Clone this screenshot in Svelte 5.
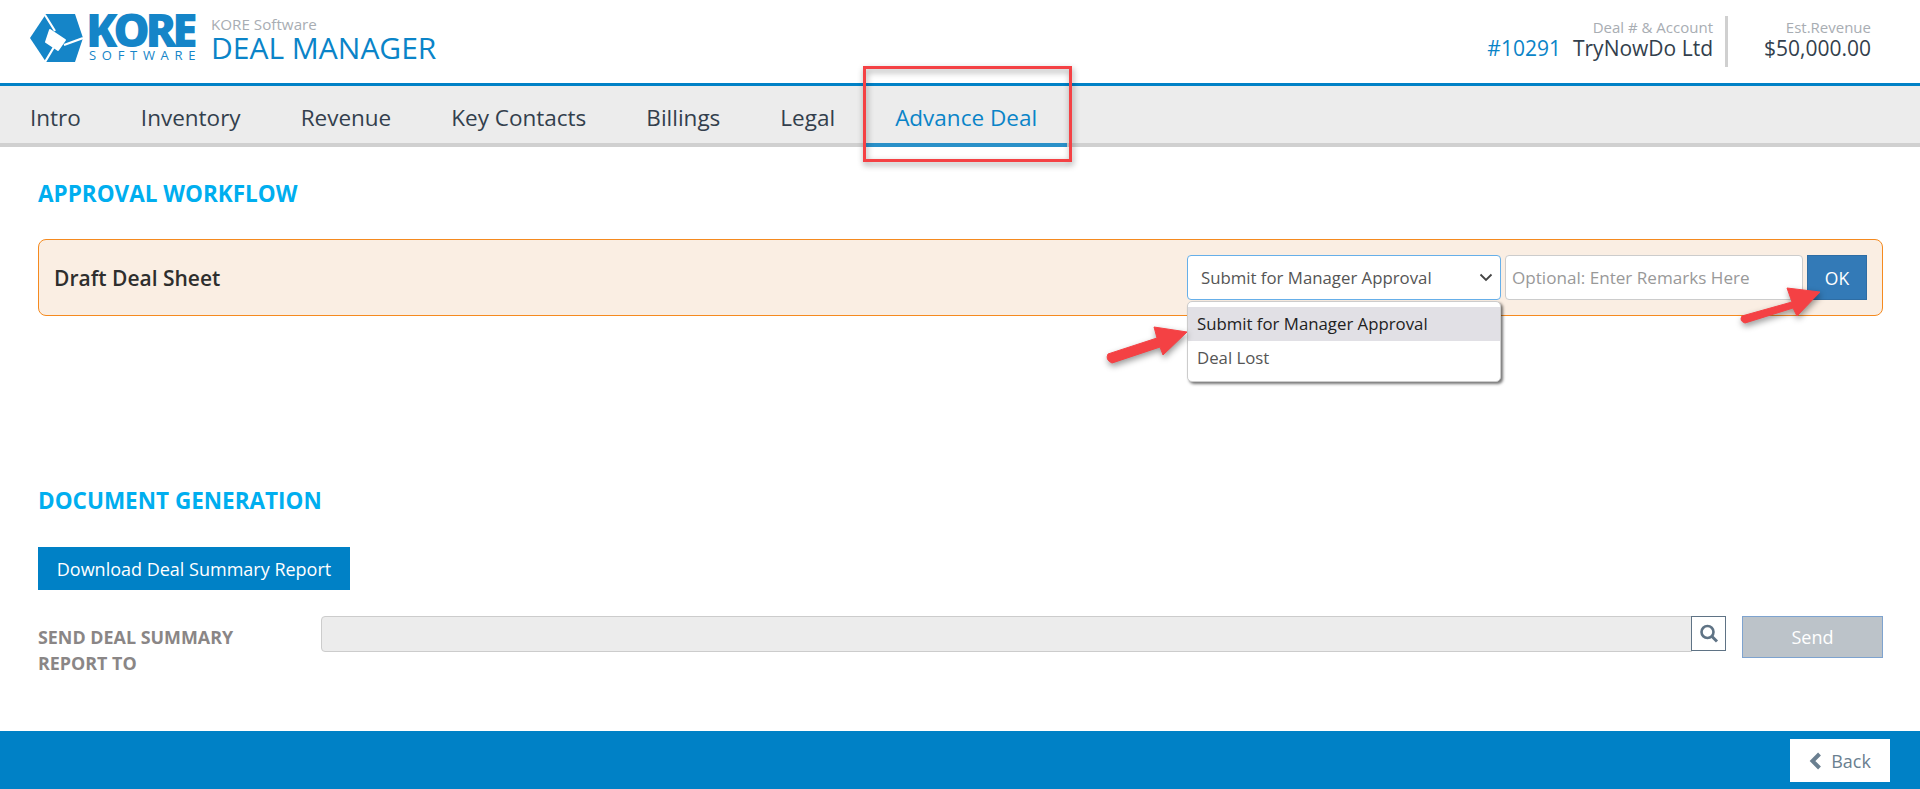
<script>
  const tabs = ['Intro', 'Inventory', 'Revenue', 'Key Contacts', 'Billings', 'Legal', 'Advance Deal'];
  let active = 'Advance Deal';
</script>

<div class="page">
  <header class="top">
    <div class="brand">
      <div class="logo">
        <svg class="mark" viewBox="0 0 53 48" width="53" height="48">
          <polygon points="0,24 16,0 45,0 53,24 45,48 16,48" fill="#1585c8" />
          <path d="M15 1 L25 17 M53 24 L34 31 M15 48 L24 33" stroke="#fff" stroke-width="2.2" fill="none" />
          <path d="M20 16 L35 26 L28 36 L16 28 Z" fill="#fff" stroke="#fff" stroke-width="2" stroke-linejoin="round" />
        </svg>
        <div class="wordmark">
          <span class="kore">KORE</span>
          <span class="soft">SOFTWARE</span>
        </div>
      </div>
      <div class="app-title">
        <span class="small">KORE Software</span>
        <span class="big">DEAL MANAGER</span>
      </div>
    </div>
    <div class="deal-info">
      <div class="info">
        <span class="lbl">Deal # &amp; Account</span>
        <span class="val"><span class="num">#10291</span>TryNowDo Ltd</span>
      </div>
      <div class="info rev">
        <span class="lbl">Est.Revenue</span>
        <span class="val">$50,000.00</span>
      </div>
    </div>
  </header>

  <nav class="tabs">
    {#each tabs as tab}
      <div class="tab" class:active={tab === active}>{tab}</div>
    {/each}
  </nav>

  <main>
    <h2 class="first">APPROVAL WORKFLOW</h2>
    <div class="panel">
      <div class="panel-title">Draft Deal Sheet</div>
      <div class="controls">
        <div class="select-wrap">
          <div class="select">
            <span>Submit for Manager Approval</span>
            <svg width="14" height="9" viewBox="0 0 14 9"><path d="M1.5 1.5 L7 7 L12.5 1.5" stroke="#444" stroke-width="1.8" fill="none" /></svg>
          </div>
          <div class="menu">
            <div class="opt on">Submit for Manager Approval</div>
            <div class="opt">Deal Lost</div>
          </div>
        </div>
        <input class="remarks" placeholder="Optional: Enter Remarks Here" />
        <button class="ok">OK</button>
      </div>
    </div>

    <h2 class="second">DOCUMENT GENERATION</h2>
    <button class="download">Download Deal Summary Report</button>
    <div class="send-row">
      <div class="send-label">SEND DEAL SUMMARY REPORT TO</div>
      <div class="send-input"></div>
      <button class="search" aria-label="Search">
        <svg width="20" height="20" viewBox="0 0 20 20"><circle cx="8.5" cy="8" r="6" stroke="#5f7385" stroke-width="2.6" fill="none" /><path d="M13 12.5 L18 17.5" stroke="#5f7385" stroke-width="3" /></svg>
      </button>
      <button class="send">Send</button>
    </div>
  </main>

  <footer>
    <button class="back">
      <svg width="13" height="18" viewBox="0 0 13 18"><path d="M10.5 2 L3.5 9 L10.5 16" stroke="#6a7f90" stroke-width="4" fill="none" /></svg>
      Back
    </button>
  </footer>

  <!-- annotations drawn over the screenshot -->
  <svg class="notes" width="1920" height="789" viewBox="0 0 1920 789">
    <rect x="864.5" y="67.5" width="206" height="93" fill="none" stroke="#f44144" stroke-width="3" />
    <path d="M1108 354 L1157 338 L1154 327 L1187 332 L1163 355 L1160 347 L1112 363 Q1105 360 1108 354 Z" fill="#f44144" stroke="#f44144" stroke-linejoin="round" />
    <path d="M1742 316 L1792 302 L1787 288 L1820 292 L1797 316 L1793 308 L1745 323 Q1739 321 1742 316 Z" fill="#f44144" stroke="#f44144" stroke-linejoin="round" />
  </svg>
</div>

<style>
  :global(body) {
    margin: 0;
    background: #fff;
  }

  .page {
    position: relative;
    width: 1920px;
    height: 789px;
    display: flex;
    flex-direction: column;
    overflow: hidden;
    font-family: "Open Sans", "Noto Sans", sans-serif;
    color: #333f4d;
  }

  .top {
    height: 83px;
    flex: none;
    border-bottom: 3px solid #0081c6;
    display: flex;
    justify-content: space-between;
    align-items: center;
  }

  .brand {
    align-self: flex-start;
    display: flex;
    padding: 14px 0 0 30px;
  }

  .logo {
    display: flex;
    align-items: flex-start;
    gap: 6px;
    width: 182px;
    height: 48px;
  }

  .wordmark {
    display: flex;
    flex-direction: column;
    color: #1585c8;
  }

  .kore {
    font-size: 46px;
    font-weight: 800;
    line-height: 40px;
    letter-spacing: -4.4px;
    margin: -5px 0 1px -3px;
  }

  .soft {
    font-size: 13px;
    line-height: 10px;
    letter-spacing: 5.7px;
    white-space: nowrap;
  }

  .app-title {
    display: flex;
    flex-direction: column;
    margin-left: -1px;
  }

  .small {
    font-size: 15.2px;
    line-height: 20px;
    color: #a8adb3;
  }

  .big {
    font-size: 30px;
    line-height: 28px;
    color: #0a84c8;
  }

  .deal-info {
    display: flex;
    padding-right: 49px;
  }

  .info {
    display: flex;
    flex-direction: column;
    align-items: flex-end;
    padding: 2px 12px 0 0;
    box-sizing: border-box;
    height: 51px;
    border-right: 3px solid #d0d0d0;
  }

  .info.rev {
    border-right: none;
    padding: 2px 0 0 36px;
  }

  .lbl {
    font-size: 15px;
    line-height: 19px;
    color: #a8adb3;
  }

  .val {
    font-size: 21px;
    line-height: 22px;
  }

  .num {
    color: #0a84c8;
    margin-right: 12px;
  }

  .tabs {
    flex: none;
    height: 57px;
    display: flex;
    background: #ececec;
    border-bottom: 4px solid #d0d0d0;
  }

  .tab {
    box-sizing: border-box;
    height: 61px;
    padding: 5px 30px 0;
    display: flex;
    align-items: center;
    font-size: 22.5px;
    border-bottom: 4px solid transparent;
  }

  .tab.active {
    color: #0a84c8;
    border-bottom-color: #2a90c8;
  }

  main {
    flex: 1;
    padding: 0 37px 0 38px;
    display: flex;
    flex-direction: column;
    align-items: flex-start;
  }

  h2 {
    margin: 0;
    font-size: 22.5px;
    line-height: 28px;
    font-weight: 700;
    color: #00aeef;
  }

  h2.first {
    margin-top: 33px;
  }

  .panel {
    box-sizing: border-box;
    width: 100%;
    height: 77px;
    margin-top: 31px;
    padding: 0 15px;
    display: flex;
    align-items: center;
    justify-content: space-between;
    background: #faeee3;
    border: 1px solid #f58a1f;
    border-radius: 8px;
  }

  h2.second {
    margin-top: 171px;
  }

  .panel-title {
    font-size: 21px;
    font-weight: 600;
    color: #2e2e2e;
  }

  .controls {
    display: flex;
    gap: 4px;
    height: 45px;
  }

  .select-wrap {
    position: relative;
    width: 314px;
  }

  .select {
    box-sizing: border-box;
    height: 45px;
    padding: 0 7px 0 13px;
    display: flex;
    align-items: center;
    justify-content: space-between;
    background: #fff;
    border: 1px solid #66afe9;
    border-radius: 4px;
    font-size: 16.8px;
    color: #555;
  }

  .menu {
    position: absolute;
    top: 46px;
    left: 0;
    right: 0;
    box-sizing: border-box;
    height: 81px;
    padding-top: 5px;
    background: #fff;
    border: 1px solid #ccc;
    border-radius: 5px;
    box-shadow: 2px 2px 3px rgba(0, 0, 0, 0.55);
    font-size: 16.8px;
    color: #555;
    z-index: 2;
  }

  .opt {
    height: 34px;
    line-height: 34px;
    padding-left: 9px;
  }

  .opt.on {
    background: #e1e0e5;
    color: #222;
  }

  .remarks {
    box-sizing: border-box;
    width: 298px;
    height: 45px;
    padding: 0 6px;
    border: 1px solid #ccc;
    border-radius: 4px;
    background: #fff;
    font-family: inherit;
    font-size: 17.1px;
    outline: none;
  }

  .remarks::placeholder {
    color: #999;
    opacity: 1;
  }

  button {
    font-family: inherit;
    cursor: pointer;
    border: none;
    padding: 0;
  }

  .ok {
    width: 60px;
    height: 45px;
    background: #337ab7;
    border: 1px solid #2e6da4;
    color: #fff;
    font-size: 17.5px;
  }

  .download {
    width: 312px;
    height: 43px;
    margin-top: 32px;
    background: #0081c6;
    color: #fff;
    font-size: 18px;
  }

  .send-row {
    width: 100%;
    margin-top: 26px;
    display: flex;
    align-items: flex-start;
  }

  .send-label {
    width: 283px;
    flex: none;
    padding: 8px 40px 0 0;
    box-sizing: border-box;
    font-size: 17.9px;
    line-height: 26px;
    font-weight: 700;
    color: #8a8686;
  }

  .send-input {
    flex: 1;
    box-sizing: border-box;
    height: 36px;
    background: #ececec;
    border: 1px solid #ccc;
    border-radius: 4px 0 0 4px;
  }

  .search {
    box-sizing: border-box;
    width: 35px;
    height: 35px;
    margin-left: -1px;
    background: #fff;
    border: 1px solid #5f7385;
    display: flex;
    align-items: center;
    justify-content: center;
  }

  .send {
    box-sizing: border-box;
    width: 141px;
    height: 42px;
    margin-left: 16px;
    background: #bcc3c9;
    border: 1px solid #7ea3cf;
    color: #fff;
    font-size: 18px;
  }

  footer {
    flex: none;
    height: 58px;
    background: #0081c6;
    display: flex;
    justify-content: flex-end;
    align-items: flex-start;
    padding: 8px 30px 0 0;
    box-sizing: border-box;
  }

  .back {
    width: 100px;
    height: 43px;
    background: #fff;
    color: #6a7f90;
    font-size: 18px;
    display: flex;
    align-items: center;
    justify-content: center;
    gap: 9px;
  }

  .notes {
    position: absolute;
    top: 0;
    left: 0;
    pointer-events: none;
    z-index: 3;
    filter: drop-shadow(1px 3px 3px rgba(0, 0, 0, 0.4));
  }
</style>
